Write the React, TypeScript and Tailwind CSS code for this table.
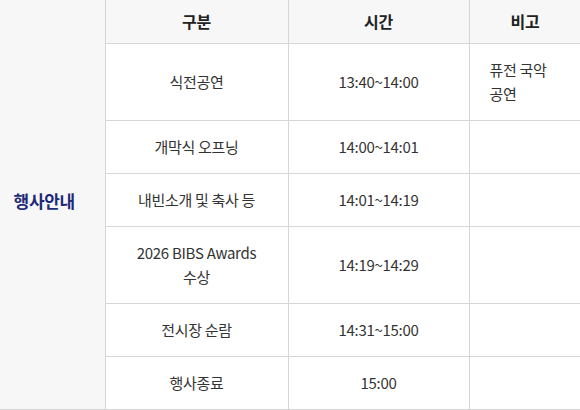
const rows = [
  { name: ["식전공연"], time: "13:40~14:00", note: ["퓨전 국악", "공연"] },
  { name: ["개막식 오프닝"], time: "14:00~14:01", note: [] },
  { name: ["내빈소개 및 축사 등"], time: "14:01~14:19", note: [] },
  { name: ["2026 BIBS Awards", "수상"], time: "14:19~14:29", note: [] },
  { name: ["전시장 순람"], time: "14:31~15:00", note: [] },
  { name: ["행사종료"], time: "15:00", note: [] },
];

export default function App() {
  return (
    <div
      className="w-[580px] h-[410px] overflow-hidden bg-white"
      style={{ fontFamily: '"Noto Sans CJK KR", "Noto Sans", sans-serif' }}
    >
      <table className="table-fixed border-collapse w-[581px] text-[15px] leading-6 tracking-[-0.02em] text-[#333]">
        <colgroup>
          <col className="w-[105px]" />
          <col className="w-[183px]" />
          <col className="w-[181px]" />
          <col className="w-[112px]" />
        </colgroup>
        <tbody>
          <tr>
            <td
              rowSpan={7}
              className="bg-[#f7f7f7] border-r border-b border-[#d6d6d6] pr-4 pb-2 text-center align-middle font-bold text-[17px] text-[#1e2a78]"
            >
              행사안내
            </td>
            <th className="bg-[#f7f7f7] border border-t-0 border-[#d6d6d6] pt-[9px] pb-[10px] text-[16px] font-bold text-[#222]">
              구분
            </th>
            <th className="bg-[#f7f7f7] border border-t-0 border-[#d6d6d6] pt-[9px] pb-[10px] text-[16px] font-bold text-[#222]">
              시간
            </th>
            <th className="bg-[#f7f7f7] border border-t-0 border-[#d6d6d6] pt-[9px] pb-[10px] text-[16px] font-bold text-[#222]">
              비고
            </th>
          </tr>
          {rows.map((r) => (
            <tr key={r.time}>
              <td className="border border-[#d6d6d6] py-[14px] text-center align-middle">
                {r.name.map((n) => (
                  <div key={n}>{n}</div>
                ))}
              </td>
              <td className="border border-[#d6d6d6] py-[14px] text-center align-middle">
                {r.time}
              </td>
              <td className="border border-[#d6d6d6] py-[14px] pl-5 align-top">
                {r.note.map((n) => (
                  <div key={n}>{n}</div>
                ))}
              </td>
            </tr>
          ))}
        </tbody>
      </table>
    </div>
  );
}
